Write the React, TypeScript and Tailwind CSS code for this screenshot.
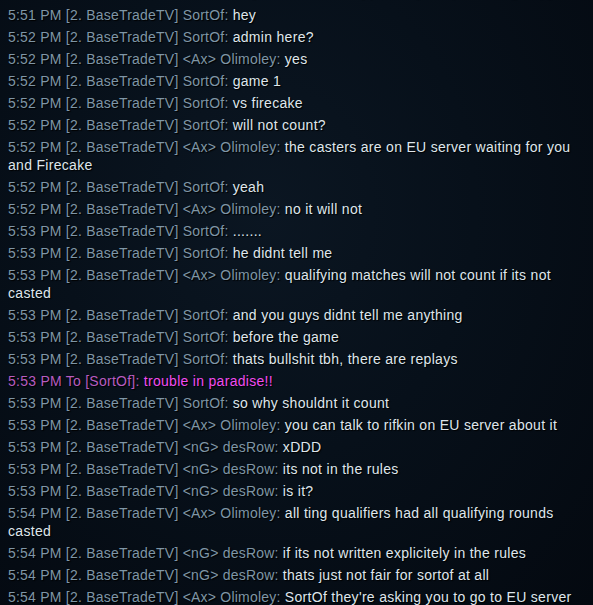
type Msg = {
  time: string;
  channel?: string;
  tag?: string;
  name: string;
  text: string;
  whisper?: boolean;
};

const msgs: Msg[] = [
  { time: "5:51 PM", channel: "2. BaseTradeTV", name: "SortOf", text: "hey" },
  { time: "5:52 PM", channel: "2. BaseTradeTV", name: "SortOf", text: "admin here?" },
  { time: "5:52 PM", channel: "2. BaseTradeTV", tag: "Ax", name: "Olimoley", text: "yes" },
  { time: "5:52 PM", channel: "2. BaseTradeTV", name: "SortOf", text: "game 1" },
  { time: "5:52 PM", channel: "2. BaseTradeTV", name: "SortOf", text: "vs firecake" },
  { time: "5:52 PM", channel: "2. BaseTradeTV", name: "SortOf", text: "will not count?" },
  {
    time: "5:52 PM",
    channel: "2. BaseTradeTV",
    tag: "Ax",
    name: "Olimoley",
    text: "the casters are on EU server waiting for you and Firecake",
  },
  { time: "5:52 PM", channel: "2. BaseTradeTV", name: "SortOf", text: "yeah" },
  { time: "5:52 PM", channel: "2. BaseTradeTV", tag: "Ax", name: "Olimoley", text: "no it will not" },
  { time: "5:53 PM", channel: "2. BaseTradeTV", name: "SortOf", text: "......." },
  { time: "5:53 PM", channel: "2. BaseTradeTV", name: "SortOf", text: "he didnt tell me" },
  {
    time: "5:53 PM",
    channel: "2. BaseTradeTV",
    tag: "Ax",
    name: "Olimoley",
    text: "qualifying matches will not count if its not casted",
  },
  { time: "5:53 PM", channel: "2. BaseTradeTV", name: "SortOf", text: "and you guys didnt tell me anything" },
  { time: "5:53 PM", channel: "2. BaseTradeTV", name: "SortOf", text: "before the game" },
  { time: "5:53 PM", channel: "2. BaseTradeTV", name: "SortOf", text: "thats bullshit tbh, there are replays" },
  { time: "5:53 PM", name: "SortOf", text: "trouble in paradise!!", whisper: true },
  { time: "5:53 PM", channel: "2. BaseTradeTV", name: "SortOf", text: "so why shouldnt it count" },
  {
    time: "5:53 PM",
    channel: "2. BaseTradeTV",
    tag: "Ax",
    name: "Olimoley",
    text: "you can talk to rifkin on EU server about it",
  },
  { time: "5:53 PM", channel: "2. BaseTradeTV", tag: "nG", name: "desRow", text: "xDDD" },
  { time: "5:53 PM", channel: "2. BaseTradeTV", tag: "nG", name: "desRow", text: "its not in the rules" },
  { time: "5:53 PM", channel: "2. BaseTradeTV", tag: "nG", name: "desRow", text: "is it?" },
  {
    time: "5:54 PM",
    channel: "2. BaseTradeTV",
    tag: "Ax",
    name: "Olimoley",
    text: "all ting qualifiers had all qualifying rounds casted",
  },
  { time: "5:54 PM", channel: "2. BaseTradeTV", tag: "nG", name: "desRow", text: "if its not written explicitely in the rules" },
  { time: "5:54 PM", channel: "2. BaseTradeTV", tag: "nG", name: "desRow", text: "thats just not fair for sortof at all" },
  {
    time: "5:54 PM",
    channel: "2. BaseTradeTV",
    tag: "Ax",
    name: "Olimoley",
    text: "SortOf they're asking you to go to EU server",
  },
];

function Line({ m, first }: { m: Msg; first?: boolean }) {
  const gap = first ? "mt-[6px]" : "mt-1";
  if (m.whisper) {
    return (
      <p className={`${gap} leading-[18px]`}>
        <span className="text-[#b85cc0] tracking-[0.25px]">
          {m.time} To [{m.name}]:{" "}
        </span>
        <span className="text-[#f04cf0] tracking-[0.3px]">{m.text}</span>
      </p>
    );
  }
  return (
    <p className={`${gap} leading-[18px]`}>
      <span className="text-[#7f96a6] tracking-[0.22px]">
        {m.time} [{m.channel}] {m.tag ? `<${m.tag}> ` : ""}
        {m.name}:{" "}
      </span>
      <span className="text-[#dfe6ec] tracking-[0.3px]">{m.text}</span>
    </p>
  );
}

export default function App() {
  return (
    <div className="h-[605px] w-[593px] overflow-hidden bg-[radial-gradient(ellipse_at_45%_35%,#0b1622_0%,#07101a_45%,#040910_100%)]">
      <div
        className="-mt-[22px] pl-2 pr-2 text-[14px] [text-shadow:1px_1px_1px_#000]"
        style={{ fontFamily: '"Liberation Sans", Arial, sans-serif' }}
      >
        {/* previous line, scrolled mostly out of view */}
        <p className="mt-1 leading-[18px]">
          <span className="text-[#7f96a6] tracking-[0.22px]">5:51 PM SortOf is now in the channel </span>
          <span className="text-[#2f8fe8] tracking-[0.3px]">[2. BaseTradeTV] please join up for the group]</span>
        </p>
        {msgs.map((m, i) => (
          <Line key={i} m={m} first={i === 0} />
        ))}
      </div>
    </div>
  );
}
